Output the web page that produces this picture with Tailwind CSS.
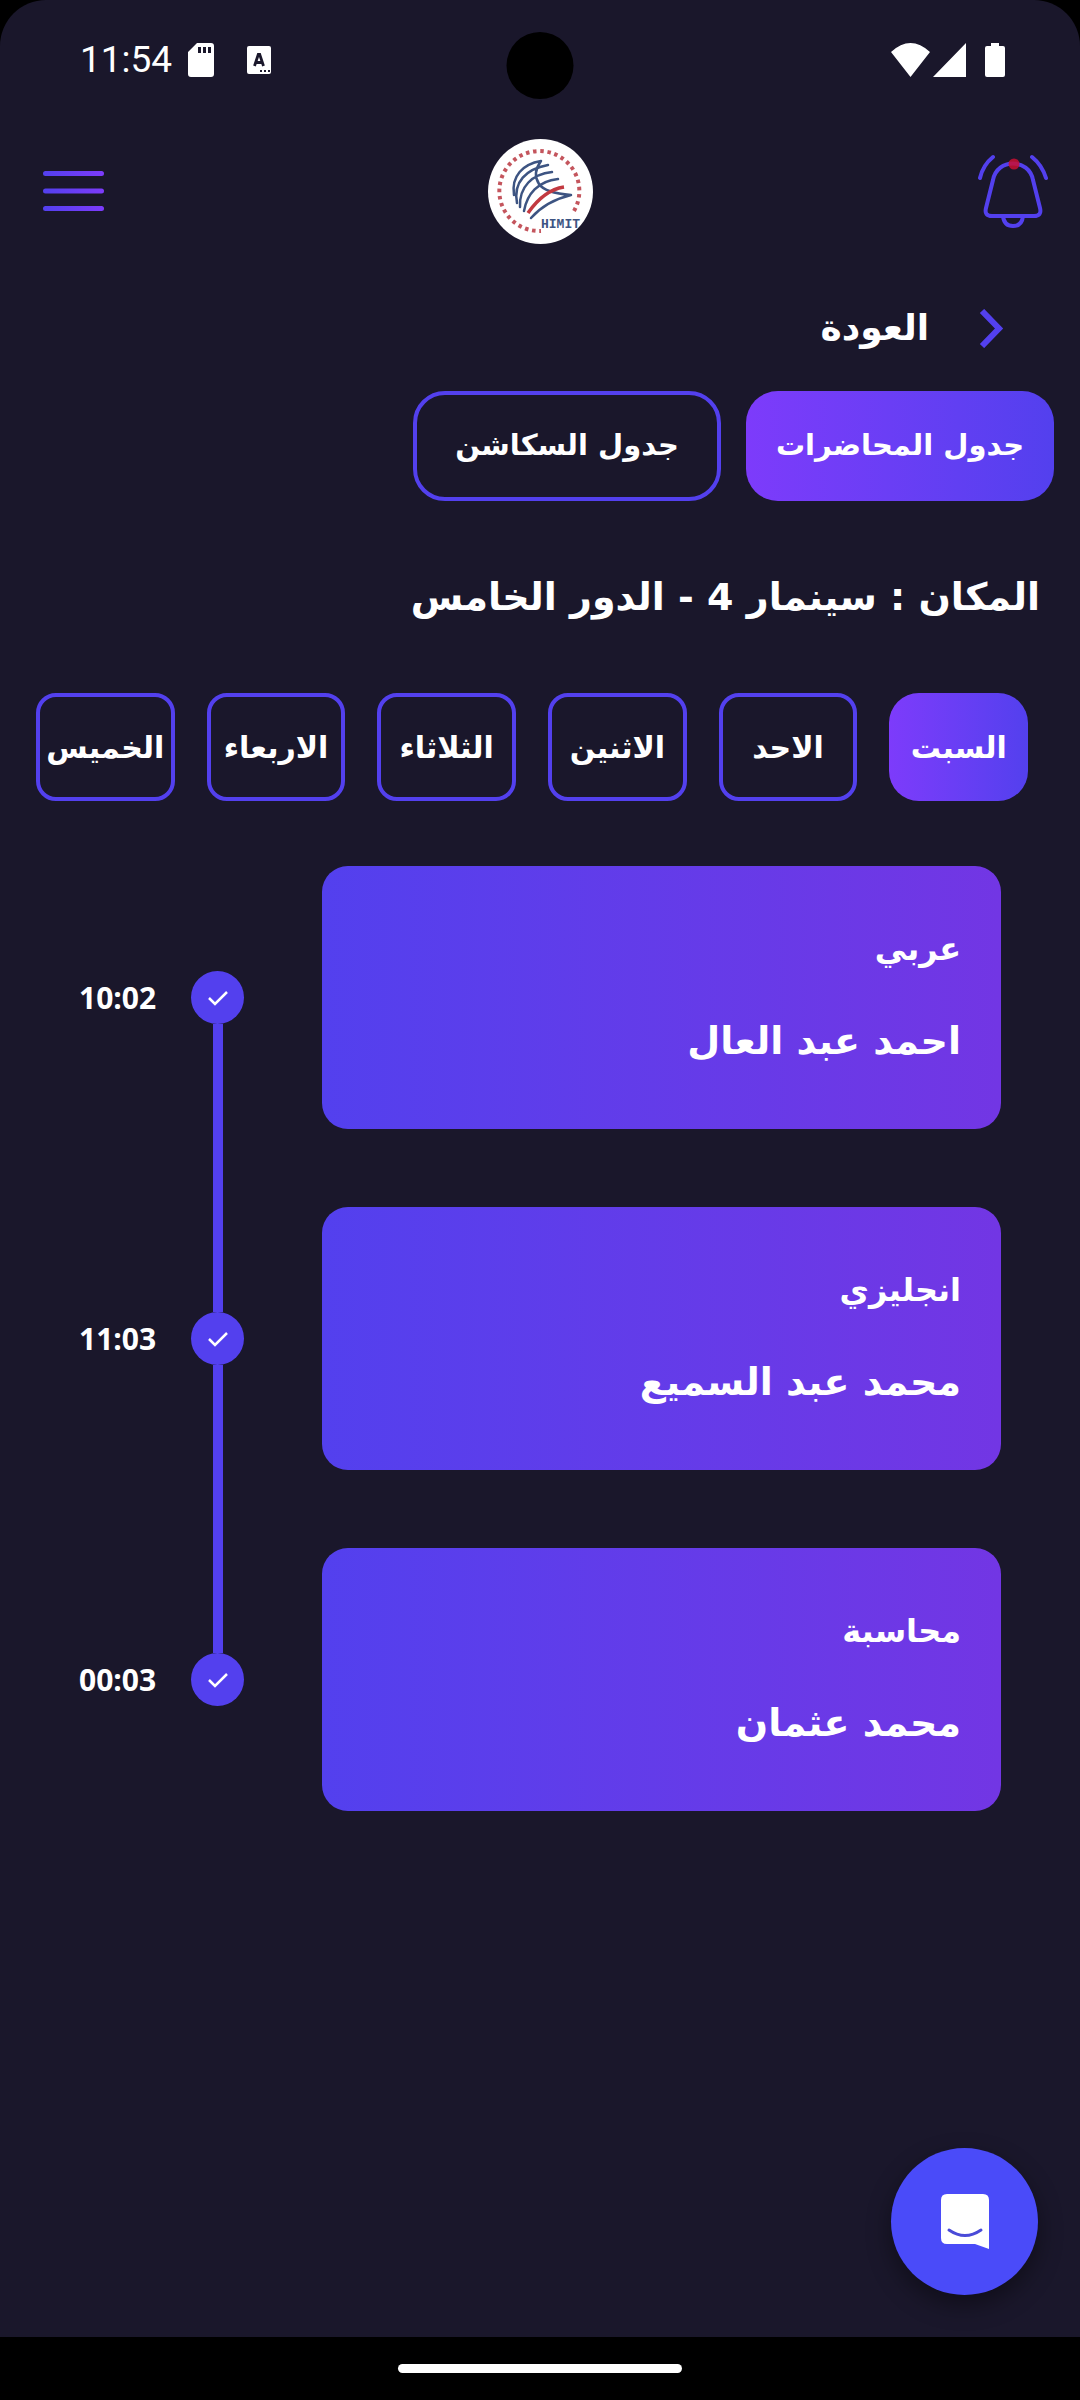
<!DOCTYPE html>
<html lang="ar" dir="rtl">
<head>
<meta charset="utf-8">
<meta name="viewport" content="width=device-width, initial-scale=1">
<title>جدول المحاضرات</title>
<script src="https://cdn.jsdelivr.net/npm/@tailwindcss/browser@4"></script>
</head>
<body class="bg-black font-['DejaVu_Sans',sans-serif] text-white">
<div class="flex min-h-screen flex-col">
  <div class="relative flex flex-1 flex-col rounded-t-[46px] bg-[#1a172b]">

    <!-- Status bar -->
    <div dir="ltr" class="relative flex h-[120px] items-center justify-between pr-[75px] pl-20 font-[Roboto,sans-serif]">
      <div class="flex items-center">
        <span class="text-[37px] leading-[44px]">11:54</span>
        <svg class="ml-4 h-[34px] w-[26px]" viewBox="0 0 26 34" aria-hidden="true"><path fill="#fff" fill-rule="evenodd" d="M9 0h14a3 3 0 0 1 3 3v28a3 3 0 0 1-3 3H3a3 3 0 0 1-3-3V9zM10 4v6h3V4zm5 0v6h3V4zm5 0v6h3V4z"/></svg>
        <svg class="ml-[33px] h-[28px] w-[24px]" viewBox="0 0 24 28" aria-hidden="true"><rect width="24" height="28" rx="2" fill="#fff"/><path d="M7.500 20 11.300 8.500h1.400L16.500 20M9 16.500h6" fill="none" stroke="#1a172b" stroke-width="2.800"/><path d="M13 25h2m2 0h2m2 0h2" stroke="#1a172b" stroke-width="2"/></svg>
      </div>
      <div class="absolute top-8 left-1/2 size-[67px] -translate-x-1/2 rounded-full bg-black"></div>
      <svg class="h-[34px] w-[114px]" viewBox="0 0 114 34" fill="#fff" aria-hidden="true"><path d="M0 9Q19.500-9 39 9L19.500 34zM42 34 75 0v34zM94 5q0-2 2-2h4V0h8v3h4q2 0 2 2v27q0 2-2 2H96q-2 0-2-2z"/></svg>
    </div>

    <!-- App bar -->
    <header dir="ltr" class="grid h-[142px] grid-cols-[1fr_auto_1fr] items-center px-8">
      <button type="button" aria-label="القائمة" class="ml-[11px] justify-self-start">
        <svg class="h-10 w-[61px]" viewBox="0 0 61 40" aria-hidden="true"><defs><linearGradient id="bar"><stop stop-color="#5340ee"/><stop offset="1" stop-color="#7d3bfb"/></linearGradient></defs><g fill="url(#bar)"><rect width="61" height="5" rx="2.500"/><rect y="17.500" width="61" height="5" rx="2.500"/><rect y="35" width="61" height="5" rx="2.500"/></g></svg>
      </button>
      <svg class="size-[105px]" viewBox="0 0 105 105" role="img" aria-label="HIMIT">
        <circle cx="52.500" cy="52.500" r="52.500" fill="#fff"/>
        <path d="M86 72A40 40 0 1 0 53 92" fill="none" stroke="#c4555d" stroke-width="4" stroke-dasharray="3.500 3.700"/>
        <g fill="none" stroke="#3d5482" stroke-width="2.500" stroke-linecap="round">
          <path d="M26 56C23 37 35 25 53 22M29 64C25 43 38 30 60 26M32 68C31 48 44 35 64 33M36 72C39 55 50 42 70 40M53 22Q44 34 51 45 57 54 83 56M43 79Q58 62 83 56"/>
        </g>
        <path d="M40 74Q56 51 76 48" fill="none" stroke="#c23940" stroke-width="3.500"/>
        <text x="53" y="89" font-family="Liberation Mono, monospace" font-weight="700" font-size="13" fill="#3d5482">HIMIT</text>
      </svg>
      <button type="button" aria-label="الإشعارات" class="justify-self-end">
        <svg class="h-[74px] w-[70px]" viewBox="0 0 70 74" aria-hidden="true"><g fill="none" stroke="#5340ee" stroke-width="4" stroke-linecap="round" stroke-linejoin="round"><path d="M15 26C19 4 51 4 55 26L62 54Q64 62 56 62H14Q6 62 8 54ZM25 62Q26 72 35 72T45 62M2 24Q5 11 15 3M68 24Q64 11 54 3"/></g><circle cx="36" cy="10" r="5.500" fill="#c90f32" fill-opacity=".85"/></svg>
      </button>
    </header>

    <main class="flex flex-col">
      <a href="#" class="mt-[33px] mr-[76px] flex h-[66px] items-center gap-[50px] self-start text-[36px] leading-[66px] font-bold">
        <svg class="h-[39px] w-[25px]" viewBox="0 0 25 39" aria-hidden="true"><path d="M3 2 20 19.500 3 37" fill="none" stroke="#5340ee" stroke-width="6"/></svg>
        العودة
      </a>

      <div class="mt-[30px] flex gap-[25px] px-[26px]">
        <button type="button" class="h-[110px] w-[308px] rounded-[32px] bg-linear-to-l from-[#5340ee] to-[#7d3bfb] text-[29px] font-bold">جدول المحاضرات</button>
        <button type="button" class="h-[110px] w-[308px] rounded-[32px] border-4 border-[#5340ee] text-[29px] font-bold">جدول السكاشن</button>
      </div>

      <h1 class="mt-[60px] px-10 text-[38px] leading-[72px] font-bold">المكان : سينمار 4 - الدور الخامس</h1>

      <div class="mt-[60px] grid grid-cols-6 gap-8 pr-[52px] pl-9 text-[30px] font-bold">
        <button type="button" class="h-[108px] rounded-[30px] bg-linear-to-l from-[#5340ee] to-[#7d3bfb]">السبت</button>
        <button type="button" class="h-[108px] rounded-[20px] border-4 border-[#5340ee]">الاحد</button>
        <button type="button" class="h-[108px] rounded-[20px] border-4 border-[#5340ee]">الاثنين</button>
        <button type="button" class="h-[108px] rounded-[20px] border-4 border-[#5340ee]">الثلاثاء</button>
        <button type="button" class="h-[108px] rounded-[20px] border-4 border-[#5340ee]">الاربعاء</button>
        <button type="button" class="h-[108px] rounded-[20px] border-4 border-[#5340ee]">الخميس</button>
      </div>

      <ol class="mt-[26px] pr-[79px] pl-[79px]">
        <li class="flex">
          <article class="my-[39px] min-h-[263px] flex-1 rounded-[26px] bg-linear-to-l from-[#7236e4] to-[#5340ee] px-10 pt-[55px]">
            <h2 class="text-[32px] leading-[56px] font-bold">عربي</h2>
            <p class="mt-7 text-[38px] leading-[72px] font-bold">احمد عبد العال</p>
          </article>
          <div class="mr-[78px] flex w-[53px] flex-col items-center">
            <span class="flex-1"></span>
            <span class="flex size-[53px] items-center justify-center rounded-full bg-[#5340ee]"><svg class="h-4 w-5" viewBox="0 0 20 16" aria-hidden="true"><path d="m1 8 6 6L19 2" fill="none" stroke="#fff" stroke-width="2.500"/></svg></span>
            <span class="w-[10px] flex-1 bg-[#5340ee]"></span>
          </div>
          <time dir="ltr" class="w-[112px] self-center font-['Open_Sans',sans-serif] text-[30px] leading-[40px] font-bold">10:02</time>
        </li>
        <li class="flex">
          <article class="my-[39px] min-h-[263px] flex-1 rounded-[26px] bg-linear-to-l from-[#7236e4] to-[#5340ee] px-10 pt-[55px]">
            <h2 class="text-[32px] leading-[56px] font-bold">انجليزي</h2>
            <p class="mt-7 text-[38px] leading-[72px] font-bold">محمد عبد السميع</p>
          </article>
          <div class="mr-[78px] flex w-[53px] flex-col items-center">
            <span class="w-[10px] flex-1 bg-[#5340ee]"></span>
            <span class="flex size-[53px] items-center justify-center rounded-full bg-[#5340ee]"><svg class="h-4 w-5" viewBox="0 0 20 16" aria-hidden="true"><path d="m1 8 6 6L19 2" fill="none" stroke="#fff" stroke-width="2.500"/></svg></span>
            <span class="w-[10px] flex-1 bg-[#5340ee]"></span>
          </div>
          <time dir="ltr" class="w-[112px] self-center font-['Open_Sans',sans-serif] text-[30px] leading-[40px] font-bold">11:03</time>
        </li>
        <li class="flex">
          <article class="my-[39px] min-h-[263px] flex-1 rounded-[26px] bg-linear-to-l from-[#7236e4] to-[#5340ee] px-10 pt-[55px]">
            <h2 class="text-[32px] leading-[56px] font-bold">محاسبة</h2>
            <p class="mt-7 text-[38px] leading-[72px] font-bold">محمد عثمان</p>
          </article>
          <div class="mr-[78px] flex w-[53px] flex-col items-center">
            <span class="w-[10px] flex-1 bg-[#5340ee]"></span>
            <span class="flex size-[53px] items-center justify-center rounded-full bg-[#5340ee]"><svg class="h-4 w-5" viewBox="0 0 20 16" aria-hidden="true"><path d="m1 8 6 6L19 2" fill="none" stroke="#fff" stroke-width="2.500"/></svg></span>
            <span class="flex-1"></span>
          </div>
          <time dir="ltr" class="w-[112px] self-center font-['Open_Sans',sans-serif] text-[30px] leading-[40px] font-bold">00:03</time>
        </li>
      </ol>
    </main>

    <!-- Chat button -->
    <button type="button" aria-label="محادثة" class="absolute right-[42px] bottom-[42px] flex size-[147px] items-center justify-center rounded-full bg-[#4a4bf9] shadow-[0_10px_24px_rgba(0,0,0,0.4)]">
      <svg class="h-[55px] w-12" viewBox="0 0 48 55" aria-hidden="true"><path d="M6 0h36q6 0 6 6v49l-14-5H6q-6 0-6-6V6q0-6 6-6z" fill="#fff"/><path d="M8 36q16 11 32 0" fill="none" stroke="#4a4bd8" stroke-width="3" stroke-linecap="round"/></svg>
    </button>
  </div>

  <!-- Gesture bar -->
  <div class="flex h-[63px] items-center justify-center"><div class="h-[9px] w-[284px] rounded-full bg-white"></div></div>
</div>
</body>
</html>
